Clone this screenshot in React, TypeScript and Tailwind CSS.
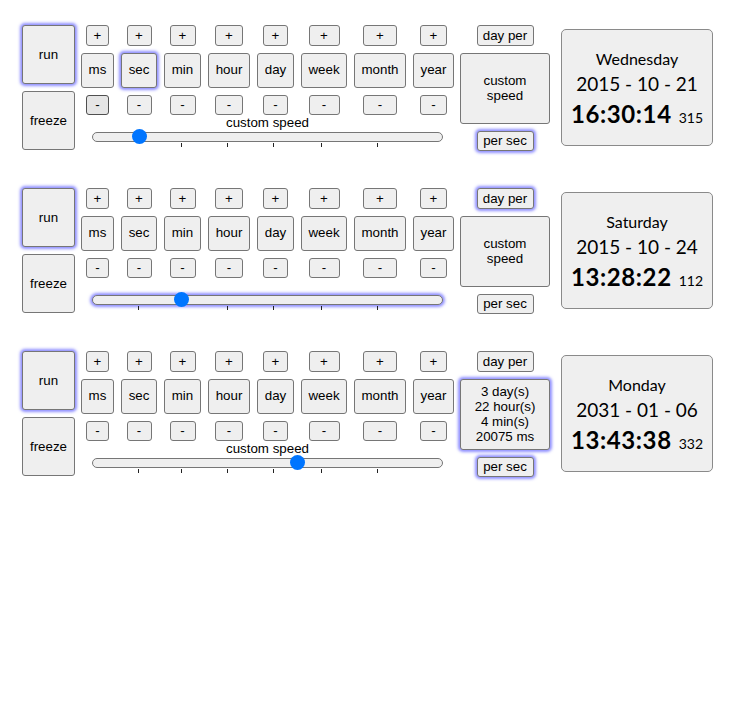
import React from 'react';

type Unit = { name: string; w: string; pm: string };

const units: Unit[] = [
  { name: 'ms', w: 'w-[33px]', pm: 'w-[23px]' },
  { name: 'sec', w: 'w-[36px]', pm: 'w-[25px]' },
  { name: 'min', w: 'w-[37px]', pm: 'w-[26px]' },
  { name: 'hour', w: 'w-[42px]', pm: 'w-[28px]' },
  { name: 'day', w: 'w-[37px]', pm: 'w-[25px]' },
  { name: 'week', w: 'w-[46px]', pm: 'w-[31px]' },
  { name: 'month', w: 'w-[52px]', pm: 'w-[34px]' },
  { name: 'year', w: 'w-[41px]', pm: 'w-[27px]' },
];

const shape = 'flex items-center justify-center rounded-[3px] border text-black';
const plain = 'border-[#767676] bg-[#efefef]';
const hovered = 'border-[#4f4f4f] bg-[#e5e5e5]';
const btn = `${shape} ${plain}`;
const glow = 'shadow-[0_0_3px_2px_rgba(70,70,255,0.6)]';

interface ClockProps {
  runGlow: boolean;
  unitGlow?: string;
  hoverMinus?: string;
  dayPerGlow: boolean;
  perSecGlow: boolean;
  boxGlow: boolean;
  sliderGlow: boolean;
  label: string;
  speed: string[];
  thumb: number;
  ticks: number[];
  weekday: string;
  date: string;
  time: string;
  ms: string;
}

function Slider({ thumb, ticks, glowing }: { thumb: number; ticks: number[]; glowing: boolean }) {
  return (
    <div className="relative ml-[11px] mt-[2px] h-[10px] w-[351px]">
      <div
        className={`h-[10px] w-full rounded-full border border-[#767676] bg-[#efefef] ${glowing ? glow : ''}`}
      />
      {ticks.map((t) => (
        <div key={t} className="absolute top-[11px] h-[4px] w-px bg-[#222]" style={{ left: t }} />
      ))}
      <div
        className="absolute top-[-3px] h-[15px] w-[15px] rounded-full bg-[#0075ff]"
        style={{ left: thumb - 7.5 }}
      />
    </div>
  );
}

function ClockRow(p: ClockProps) {
  return (
    <div className="flex items-center">
      {/* run / freeze */}
      <div className="flex flex-col gap-[7px] self-start">
        <button className={`${btn} h-[59px] w-[53px] ${p.runGlow ? glow : ''}`}>run</button>
        <button className={`${btn} h-[59px] w-[53px]`}>freeze</button>
      </div>

      {/* unit grid + slider */}
      <div className="ml-[6px] flex flex-col self-start">
        <div className="flex gap-[7px]">
          {units.map((u) => (
            <div key={u.name} className="flex flex-col items-center">
              <button className={`${btn} h-[21px] ${u.pm}`}>+</button>
              <button
                className={`${btn} mt-[6.5px] h-[35px] ${u.w} ${p.unitGlow === u.name ? glow : ''}`}
              >
                {u.name}
              </button>
              <button
                className={`${shape} mt-[7px] h-[20px] ${u.pm} ${
                  p.hoverMinus === u.name ? hovered : plain
                }`}
              >
                -
              </button>
            </div>
          ))}
        </div>
        <div className="ml-[11px] h-[15px] w-[351px] text-center leading-[15px]">{p.label}</div>
        <Slider thumb={p.thumb} ticks={p.ticks} glowing={p.sliderGlow} />
      </div>

      {/* speed column */}
      <div className="ml-[6px] flex w-[90px] flex-col items-center self-start">
        <button className={`${btn} h-[21px] w-[57px] ${p.dayPerGlow ? glow : ''}`}>day per</button>
        <div
          className={`${btn} mt-[6.5px] h-[71px] w-[90px] flex-col text-center leading-[15px] ${
            p.boxGlow ? glow : ''
          }`}
        >
          {p.speed.map((s) => (
            <div key={s}>{s}</div>
          ))}
        </div>
        <button className={`${btn} mt-[7px] h-[20px] w-[57px] ${p.perSecGlow ? glow : ''}`}>
          per sec
        </button>
      </div>

      {/* clock */}
      <div
        className="ml-[11px] flex h-[117px] w-[152px] flex-col items-center justify-center rounded-[5px] border border-[#8a8a8a] bg-[#efefef] pt-[7px] text-black"
        style={{ fontFamily: 'Lato, "Open Sans", sans-serif' }}
      >
        <div className="text-[16px] leading-[22px]">{p.weekday}</div>
        <div className="text-[19px] leading-[28px]">{p.date}</div>
        <div className="leading-[32px]">
          <span className="text-[24px] font-bold tracking-[0.6px]">{p.time}</span>
          <span className="ml-[7px] text-[14px]">{p.ms}</span>
        </div>
      </div>
    </div>
  );
}

export default function App() {
  return (
    <div
      className="flex min-h-[706px] flex-col gap-[37.5px] bg-white pl-[22px] pt-[25px] text-[13.33px] text-black"
      style={{ fontFamily: '"Liberation Sans", Arial, sans-serif' }}
    >
      <ClockRow
        runGlow
        unitGlow="sec"
        hoverMinus="ms"
        dayPerGlow={false}
        perSecGlow
        boxGlow={false}
        sliderGlow={false}
        label="custom speed"
        speed={['custom', 'speed']}
        thumb={47.7}
        ticks={[88.7, 134.7, 180.7, 228.7, 284.7]}
        weekday="Wednesday"
        date="2015 - 10 - 21"
        time="16:30:14"
        ms="315"
      />
      <ClockRow
        runGlow
        dayPerGlow
        perSecGlow={false}
        boxGlow={false}
        sliderGlow
        label=""
        speed={['custom', 'speed']}
        thumb={89.4}
        ticks={[45.7, 134.7, 180.7, 228.7, 284.7]}
        weekday="Saturday"
        date="2015 - 10 - 24"
        time="13:28:22"
        ms="112"
      />
      <ClockRow
        runGlow
        dayPerGlow={false}
        perSecGlow
        boxGlow
        sliderGlow={false}
        label="custom speed"
        speed={['3 day(s)', '22 hour(s)', '4 min(s)', '20075 ms']}
        thumb={205.7}
        ticks={[45.7, 88.7, 134.7, 180.7, 228.7, 284.7]}
        weekday="Monday"
        date="2031 - 01 - 06"
        time="13:43:38"
        ms="332"
      />
    </div>
  );
}
